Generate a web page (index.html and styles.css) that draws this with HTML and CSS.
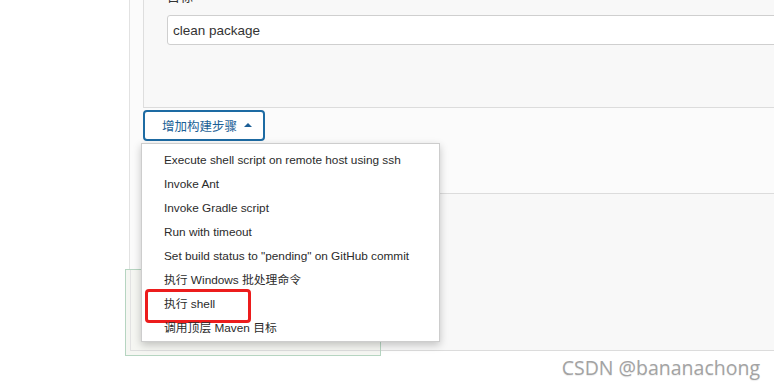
FILE: index.html
```html
<!DOCTYPE html>
<html lang="zh-CN">
<head>
  <meta charset="UTF-8">
  <meta name="viewport" content="width=device-width, initial-scale=1.0">
  <title>构建步骤</title>
  <link rel="stylesheet" href="styles.css">
</head>
<body>
  <div class="config">
    <div class="section first">
      <div class="field-label">目标</div>
      <input type="text" class="field-input" value="clean package">
    </div>

    <div class="actions">
      <button class="add-step">增加构建步骤<span class="caret"></span></button>
      <ul class="step-menu">
        <li>Execute shell script on remote host using ssh</li>
        <li>Invoke Ant</li>
        <li>Invoke Gradle script</li>
        <li>Run with timeout</li>
        <li>Set build status to "pending" on GitHub commit</li>
        <li>执行 Windows 批处理命令</li>
        <li class="marked">执行 shell</li>
        <li>调用顶层 Maven 目标</li>
      </ul>
    </div>

    <div class="section second"></div>
  </div>

  <div class="bottom-bar">
    <div class="bottom-inner"></div>
  </div>

  <div class="watermark">CSDN @bananachong</div>
</body>
</html>
```

FILE: styles.css
```css
* {
  margin: 0;
  padding: 0;
  box-sizing: border-box;
}
html, body {
  height: 387px;
  overflow: hidden;
}
body {
  position: relative;
  background: #fff;
  color: #333;
  font-family: "Liberation Sans", "Noto Sans CJK SC", sans-serif;
  font-size: 12px;
}
.config {
  margin-left: 129px;
  margin-right: -60px;
  height: 351px;
  padding-left: 13px;
  background: #fbfbfb;
  border-left: 1px solid #e2e2e2;
}
.section {
  display: flow-root;
  background: #f8f8f8;
  border-left: 1px solid #dedede;
}
.section.first {
  height: 108px;
  padding-left: 23px;
  border-bottom: 1px solid #dcdcdc;
}
.field-label {
  margin-top: -11px;
  height: 16px;
  line-height: 16px;
  font-size: 13px;
  color: #333;
}
.field-input {
  display: block;
  margin-top: 10px;
  width: 100%;
  height: 30px;
  padding: 0 5px;
  border: 1px solid #cfcfcf;
  border-radius: 3px;
  background: #fff;
  color: #333;
  font-family: "Liberation Sans", sans-serif;
  font-size: 13.5px;
}
.actions {
  position: relative;
  height: 85px;
  padding-top: 2px;
}
.add-step {
  display: flex;
  align-items: center;
  width: 122px;
  height: 31px;
  padding-left: 17px;
  border: 2px solid #1d6ba3;
  border-radius: 4px;
  background: #fff;
  color: #1c5f96;
  font-family: "Noto Sans CJK SC", sans-serif;
  font-size: 12.5px;
  cursor: pointer;
}
.caret {
  margin-left: 7px;
  margin-top: -1px;
  border-left: 4px solid transparent;
  border-right: 4px solid transparent;
  border-bottom: 4px solid #1c5f96;
}
.step-menu {
  position: absolute;
  left: -2px;
  top: 35px;
  z-index: 2;
  width: 299px;
  height: 199px;
  padding-top: 4px;
  list-style: none;
  background: #fff;
  border: 1px solid #cdcdcd;
  box-shadow: 0 3px 8px rgba(0, 0, 0, 0.22);
}
.step-menu li {
  position: relative;
  height: 24px;
  line-height: 24px;
  padding-left: 22px;
  color: #2b2b2b;
  font-size: 11.8px;
  white-space: nowrap;
}
.step-menu li.marked::after {
  content: "";
  position: absolute;
  left: 3px;
  top: -3px;
  width: 100px;
  height: 28px;
  border: 3px solid #ec1c1c;
  border-radius: 4px;
}
.section.second {
  height: 158px;
  border-top: 1px solid #dcdcdc;
  border-bottom: 1px solid #dcdcdc;
}
.bottom-bar {
  position: absolute;
  left: 125px;
  top: 269px;
  z-index: 1;
  width: 256px;
  height: 87px;
  border: 1px solid #b6d5c1;
  background: #f5f6f2;
}
.bottom-inner {
  margin-left: 4px;
  height: 81px;
  border-left: 1px solid #e2e2e2;
  border-bottom: 1px solid #dedede;
}
.watermark {
  position: absolute;
  right: 14px;
  top: 354px;
  font-family: "Open Sans", sans-serif;
  font-size: 19.5px;
  color: #a3a3a3;
  text-shadow: 0 1px 1px rgba(0, 0, 0, 0.08);
}
```
